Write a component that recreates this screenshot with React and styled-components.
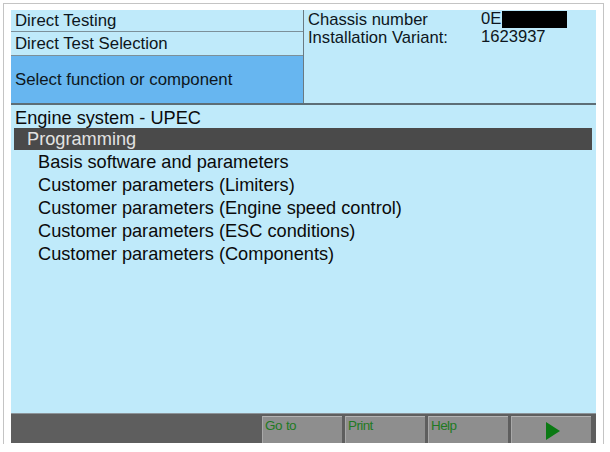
import React from "react";
import styled, { createGlobalStyle } from "styled-components";

const Global = createGlobalStyle`
  html, body { margin: 0; padding: 0; background: #ffffff; }
  body { font-family: "Liberation Sans", Arial, sans-serif; }
`;

const Frame = styled.div`
  margin: 3px 0 0 3px;
  width: 601px;
  height: 441px;
  border: 1px solid #c4c4c4;
  border-bottom: none;
  padding: 6px 7px 0 7px;
  box-sizing: border-box;
  display: flex;
  flex-direction: column;
`;

const Screen = styled.div`
  width: 585px;
  height: 433px;
  display: flex;
  flex-direction: column;
  background: #bfeafa;
  color: #0d1620;
`;

const Header = styled.div`
  display: grid;
  grid-template-columns: 292px 1px 1fr;
  height: 93px;
  border-bottom: 2px solid #5d6e76;
`;

const VDivider = styled.div`
  background: #6a7a82;
`;

const LeftHead = styled.div`
  display: flex;
  flex-direction: column;
`;

const HeadRow = styled.div`
  height: ${(p) => p.$h}px;
  display: flex;
  align-items: center;
  padding: 1px 0 0 4px;
  box-sizing: border-box;
  font-size: 16.8px;
  border-bottom: ${(p) => (p.$line ? "1px solid #7c9099" : "none")};
  background: ${(p) => (p.$active ? "#67b6f0" : "transparent")};
  flex: ${(p) => (p.$grow ? 1 : "none")};
`;

const RightHead = styled.div`
  display: grid;
  grid-template-columns: 173px 1fr;
  grid-auto-rows: 18px;
  padding: 0 0 0 4px;
  font-size: 16.6px;
  align-content: start;
`;

const Value = styled.span`
  display: flex;
  align-items: center;
`;

const Redact = styled.span`
  display: inline-block;
  width: 65px;
  height: 17px;
  background: #000;
  margin-left: 1px;
`;

const Body = styled.div`
  flex: 1;
  display: flex;
  flex-direction: column;
  padding: 1px 3px 0 3px;
`;

const SystemTitle = styled.div`
  height: 22px;
  line-height: 24px;
  font-size: 18.2px;
  padding-left: 1px;
  color: #0b0b0b;
`;

const GroupBar = styled.div`
  height: 22px;
  line-height: 23px;
  background: #4a4a4a;
  color: #e2e2e2;
  font-size: 18.2px;
  padding-left: 13px;
  margin-right: 1px;
`;

const Item = styled.div`
  height: 23px;
  line-height: 25px;
  font-size: 18.2px;
  padding-left: 24px;
  color: #0b0b0b;
`;

const Toolbar = styled.div`
  height: 30px;
  display: flex;
  background: #5e5e5e;
  border-top: 1px solid #8c9499;
  box-sizing: border-box;
  padding: 2px 1px 0 251px;
  gap: 3px;
`;

const ToolButton = styled.div`
  width: 80px;
  background: #8e8e8e;
  border-top: 1px solid #b4b4b4;
  border-left: 1px solid #a8a8a8;
  box-sizing: border-box;
  color: #1f7a23;
  font-family: "Liberation Sans Narrow", "Liberation Sans", Arial, sans-serif;
  font-size: 13.5px;
  letter-spacing: -0.6px;
  word-spacing: 1px;
  line-height: 16px;
  padding: 1px 0 0 2px;
  display: flex;
  align-items: ${(p) => (p.$center ? "center" : "flex-start")};
  justify-content: ${(p) => (p.$center ? "center" : "flex-start")};
`;

const items = [
  "Basis software and parameters",
  "Customer parameters (Limiters)",
  "Customer parameters (Engine speed control)",
  "Customer parameters (ESC conditions)",
  "Customer parameters (Components)",
];

export default function App() {
  return (
    <>
      <Global />
      <Frame>
        <Screen>
          <Header>
            <LeftHead>
              <HeadRow $h={22} $line>Direct Testing</HeadRow>
              <HeadRow $h={24} $line>Direct Test Selection</HeadRow>
              <HeadRow $active $grow>Select function or component</HeadRow>
            </LeftHead>
            <VDivider />
            <RightHead>
              <span>Chassis number</span>
              <Value>
                0E<Redact />
              </Value>
              <span>Installation Variant:</span>
              <Value>1623937</Value>
            </RightHead>
          </Header>
          <Body>
            <SystemTitle>Engine system - UPEC</SystemTitle>
            <GroupBar>Programming</GroupBar>
            {items.map((t) => (
              <Item key={t}>{t}</Item>
            ))}
          </Body>
          <Toolbar>
            <ToolButton>Go to</ToolButton>
            <ToolButton>Print</ToolButton>
            <ToolButton>Help</ToolButton>
            <ToolButton $center>
              <svg width="16" height="20" viewBox="0 0 16 20">
                <polygon points="1,1 15,10 1,19" fill="#0b7a14" />
              </svg>
            </ToolButton>
          </Toolbar>
        </Screen>
      </Frame>
    </>
  );
}
